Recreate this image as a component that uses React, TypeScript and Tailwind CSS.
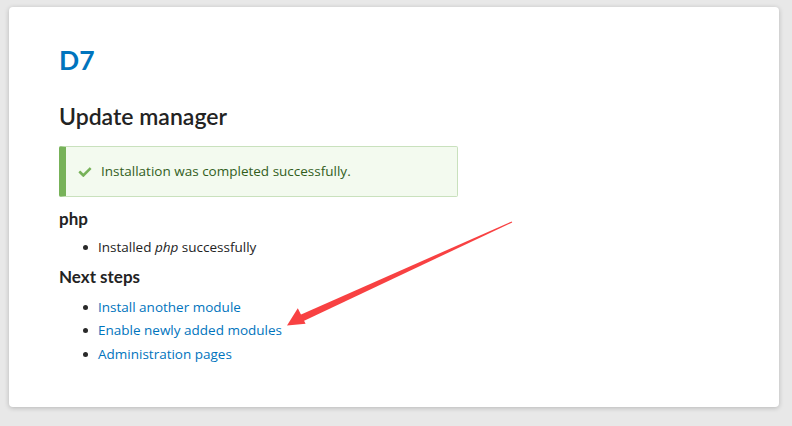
import React from "react";

const body = { fontFamily: "'Open Sans', 'Noto Sans', sans-serif" };
const head = { fontFamily: "Lato, 'Open Sans', sans-serif" };

function Bullet({ children }: { children: React.ReactNode }) {
  return (
    <li className="flex items-center leading-[23.5px]">
      <span className="ml-[24px] mr-[10px] h-[5px] w-[5px] shrink-0 rounded-full bg-[#2a2a2a]" />
      <span>{children}</span>
    </li>
  );
}

export default function App() {
  return (
    <div className="h-[426px] w-[792px] bg-[#e8e8e8] pl-[9px] pt-[7px]" style={body}>
      <div className="relative h-[400px] w-[770px] rounded-[4px] bg-white px-[50px] pt-[36px] text-[13.5px] text-[#232323] shadow-[0_1px_5px_rgba(0,0,0,0.22)]">
        <div className="text-[26.5px] font-bold leading-[34px] text-[#0074bd]" style={head}>D7</div>
        <h1 className="mt-[24px] text-[23px] font-semibold leading-[30px] text-[#232323]" style={head}>Update manager</h1>

        <div className="mt-[15px] flex h-[51px] w-[399px] items-center rounded-[2px] border border-l-[7px] border-[#c9e1bd] border-l-[#77b259] bg-[#f3faef] text-[#325e1c]">
          <svg viewBox="0 0 16 16" className="ml-[12px] mr-[9px] h-[14px] w-[14px]" fill="#77b259">
            <path d="M6.464 13.676c-.194.194-.513.194-.707 0l-4.96-4.955c-.194-.194-.194-.512 0-.707l1.405-1.407c.194-.195.512-.195.707 0l2.849 2.848c.194.195.513.195.707 0l6.629-6.626c.195-.194.514-.194.707 0l1.404 1.404c.193.194.193.513 0 .707l-8.741 8.736z" />
          </svg>
          <span>Installation was completed successfully.</span>
        </div>

        <h3 className="mt-[11px] text-[17px] font-bold leading-[22px]" style={head}>php</h3>
        <ul className="mt-[6px]">
          <Bullet>
            Installed <em>php</em> successfully
          </Bullet>
        </ul>

        <h3 className="mt-[6px] text-[17px] font-bold leading-[22px]" style={head}>Next steps</h3>
        <ul className="mt-[8px] text-[#0074bd]">
          <Bullet>
            <a href="#" className="text-[#0074bd]">Install another module</a>
          </Bullet>
          <Bullet>
            <a href="#" className="text-[#0074bd]">Enable newly added modules</a>
          </Bullet>
          <Bullet>
            <a href="#" className="text-[#0074bd]">Administration pages</a>
          </Bullet>
        </ul>

        <svg
          className="pointer-events-none absolute left-[-9px] top-[-7px]"
          width="792"
          height="426"
          viewBox="0 0 792 426"
        >
          <polygon points="511.8,221.4 512.2,222.4 302.6,321.6 299.4,315.2" fill="#f84142" />
          <polygon points="287,325.5 297.8,308.3 305.6,323.8" fill="#f84142" />
        </svg>
      </div>
    </div>
  );
}
